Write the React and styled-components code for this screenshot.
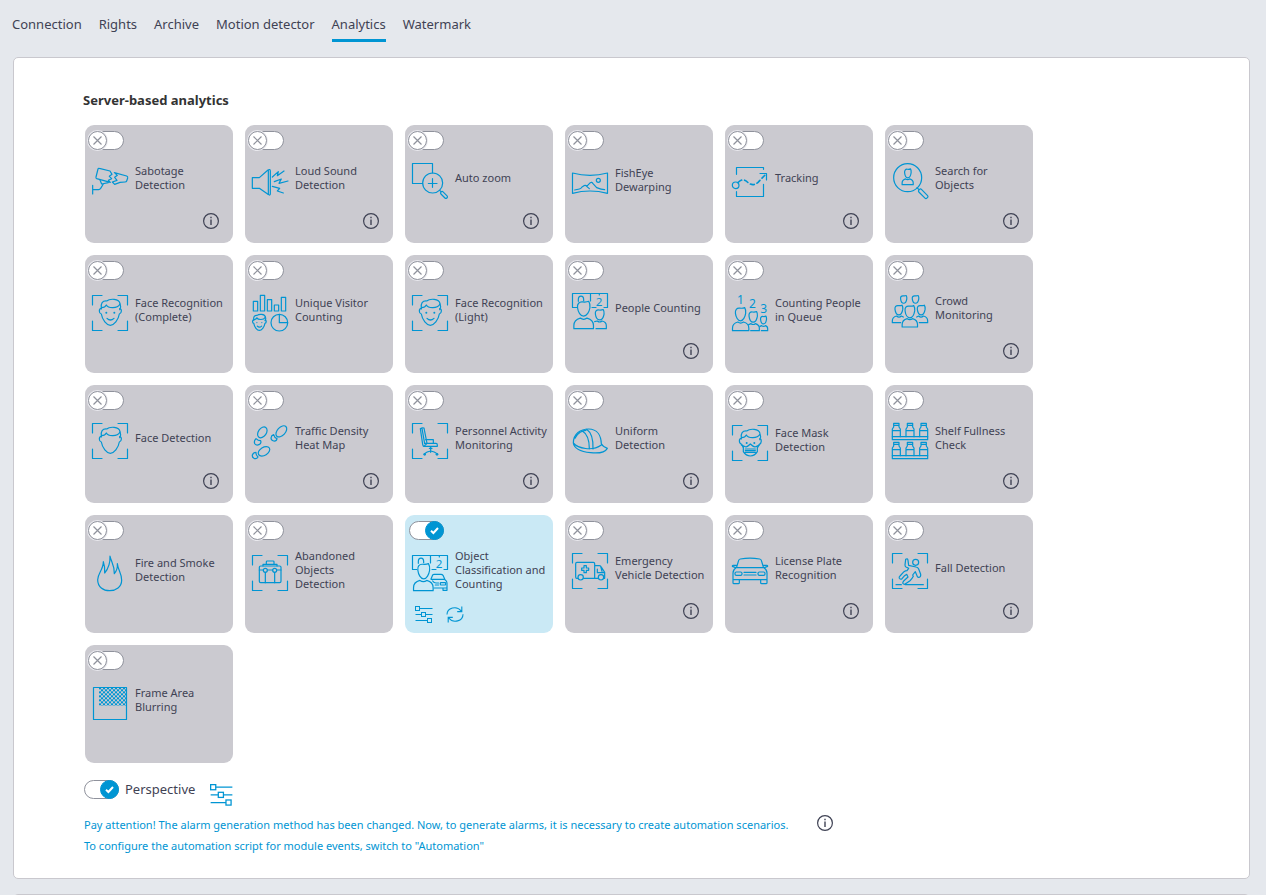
import React, { useState } from 'react';
import styled, { createGlobalStyle, css } from 'styled-components';

const blue = '#0095d3';
const ink = '#3f4254';
const line = '#c9c8ce';

const GlobalStyle = createGlobalStyle`
  *, *::before, *::after { box-sizing: border-box; }
  body {
    margin: 0;
    background: #e5e8ed;
    color: ${ink};
    font-family: "Noto Sans", "Open Sans", sans-serif;
    font-size: 11px;
  }
`;

const Page = styled.div`
  height: 100vh;
  overflow-x: hidden;
  overflow-y: auto;
  scrollbar-width: none;
`;

const Tabs = styled.nav`
  display: flex;
  gap: 17px;
  padding: 14px 12px 0;
  margin-bottom: 15px;
`;

const Tab = styled.a`
  height: 28px;
  font-size: 13px;
  line-height: 20px;
  color: ${ink};
  text-decoration: none;
  white-space: nowrap;
  border-bottom: 3px solid ${(p) => (p.$active ? blue : 'transparent')};
`;

const Panel = styled.section`
  margin: 0 16px 15px 13px;
  padding: 32px 71px 22px;
  background: #fff;
  border: 1px solid ${line};
  border-radius: 5px;
`;

const Heading = styled.h2`
  margin: 0 0 15px -2px;
  font-size: 13px;
  line-height: 20px;
  font-weight: 700;
  color: #333;
`;

const CardGrid = styled.div`
  display: grid;
  grid-template-columns: repeat(auto-fill, 148px);
  gap: 12px;
  max-width: 960px;
`;

const Card = styled.article`
  height: 118px;
  padding-top: 6px;
  border-radius: 9px;
  background: ${(p) => (p.$on ? '#cae9f5' : '#cbcad0')};
`;

const CardBody = styled.div`
  display: flex;
  align-items: center;
  gap: 7px;
  height: ${(p) => (p.$raised ? 56 : 60)}px;
  padding-left: 7px;
`;

const CardTitle = styled.h3`
  margin: 0;
  font-size: 11px;
  line-height: 14px;
  font-weight: 400;
  white-space: pre;
`;

const CardInfo = styled.div`
  display: flex;
  justify-content: flex-end;
  padding: 6px 13px 0 0;
`;

const CardTools = styled.div`
  display: flex;
  gap: 13px;
  padding: 6px 0 0 10px;
`;

const IconButton = styled.button`
  display: block;
  padding: 0;
  border: 0;
  background: none;
  cursor: pointer;
  color: ${(p) => (p.$dark ? ink : blue)};
  svg { display: block; }
`;

const Switch = styled.label`
  position: relative;
  display: block;
  flex: none;
  width: 35px;
  height: 19px;
  margin-left: ${(p) => (p.$inCard ? 4 : 0)}px;
  border: 1px solid #8f929c;
  border-radius: 10px;
  background: #fff;
  cursor: pointer;
`;

const SwitchInput = styled.input`
  position: absolute;
  inset: 0;
  width: 100%;
  height: 100%;
  margin: 0;
  opacity: 0;
  cursor: pointer;
`;

const Knob = styled.span`
  position: absolute;
  top: -1px;
  width: 19px;
  height: 19px;
  border-radius: 50%;
  pointer-events: none;
  ${(p) =>
    p.$on
      ? css`right: -1px; background: ${blue}; border: 1px solid ${blue};`
      : css`left: -2px; background: #fff; border: 1px solid #8f929c; box-shadow: 0 0 0 1px #e9e9ee;`}
  svg { display: block; }
`;

const Drawing = styled.svg`
  flex: none;
  width: 36px;
  height: 36px;
  margin-top: 6px;
  overflow: visible;
  fill: none;
  stroke: ${blue};
  stroke-width: 1.2px;
  stroke-linejoin: round;
  stroke-linecap: round;
  * { vector-effect: non-scaling-stroke; }
  .solid { fill: ${blue}; stroke: none; }
  text { fill: ${blue}; stroke: none; text-anchor: middle; }
`;

const PerspectiveRow = styled.div`
  display: flex;
  align-items: flex-start;
  margin: 17px 0 0 -1px;
`;

const PerspectiveLabel = styled.label`
  margin: 0 15px 0 6px;
  font-size: 13px;
  line-height: 19px;
`;

const PerspectiveTools = styled.div`
  padding-top: 4px;
`;

const Notes = styled.div`
  display: flex;
  align-items: flex-start;
  gap: 28px;
  margin: 7px 0 0 -1px;
`;

const NoteText = styled.div`
  color: ${blue};
  font-size: 11px;
  line-height: 21px;
`;

const Note = styled.p`
  margin: 0;
`;

function Toggle({ id, on, onChange, name, inCard }) {
  return (
    <Switch $inCard={inCard}>
      <SwitchInput id={id} type="checkbox" checked={on} onChange={onChange} aria-label={name} />
      <Knob $on={on}>
        <svg width="17" height="17" viewBox="0 0 17 17" fill="none">
          {on ? (
            <path d="M5 8.8 7.4 11 12 6" stroke="#fff" strokeWidth="2" />
          ) : (
            <path d="M4.5 4.5l8 8M12.5 4.5l-8 8" stroke="#8f929c" strokeWidth="1.2" />
          )}
        </svg>
      </Knob>
    </Switch>
  );
}

function InfoButton({ name }) {
  return (
    <IconButton type="button" $dark aria-label={name}>
      <svg width="18" height="18" viewBox="0 0 18 18" fill="none" stroke="currentColor">
        <circle cx="9" cy="9" r="7.4" strokeWidth="1.2" />
        <path d="M9 7.6V13" strokeWidth="1.4" />
        <path d="M9 4.8v1.5" strokeWidth="1.4" />
      </svg>
    </IconButton>
  );
}

function SlidersIcon({ size }) {
  return (
    <svg width={size} height={size} viewBox="0 0 18 18" fill="none" stroke="currentColor" strokeWidth="1">
      <rect x="0.5" y="0.5" width="4" height="4" />
      <path d="M4.5 2.5h13M0.5 8.5h6M10.5 8.5h7M0.5 14.5h12" />
      <rect x="6.5" y="6.5" width="4" height="4" />
      <rect x="12.5" y="12.5" width="4" height="4" />
    </svg>
  );
}

function RefreshIcon() {
  return (
    <svg width="18" height="18" viewBox="0 0 18 18" fill="none" stroke="currentColor" strokeWidth="1.1">
      <path d="M1 8.6C1 2 10.6-1 15.2 5M15.8 .6v5h-4.6" />
      <path d="M17 8.2C17 15 7.4 18 2.8 12M2.2 16.4v-5h4.6" />
    </svg>
  );
}

const Frame = () => <path d="M1.5 30V1.5H30M78 1.5H106.5V30M106.5 78V106.5H78M30 106.5H1.5V78" />;

const Head = ({ x, y, w, h }) => (
  <path
    transform={`translate(${x} ${y}) scale(${w / 100} ${h / 100})`}
    d="M4 44C0 18 16 4 42 6C62 8 78 6 88 2C96 12 99 28 97 44C92 70 74 99 50 99C26 99 8 72 4 44Z"
  />
);

const Bust = ({ x, y, w, h }) => (
  <path
    transform={`translate(${x} ${y}) scale(${w / 100} ${h / 100})`}
    d="M1 100V72C1 28 16 12 33 4Q50 26 67 4C84 12 99 28 99 72V100Z"
  />
);

const FaceOutline = () => (
  <>
    <path d="M28 40C20 40 20 55 28 57C31 75 44 91 55 91C66 91 79 75 82 57C90 55 90 41 83 41" />
    <path d="M28 42C25 24 32 17 44 18C52 11 82 9 84 26C88 34 85 40 83 44" />
    <path d="M29 38C36 38 41 34 43 30C48 40 76 42 84 27" />
  </>
);

const FaceFeatures = () => (
  <>
    <circle className="solid" cx="43" cy="53" r="3" />
    <circle className="solid" cx="67" cy="53" r="3" />
    <path d="M45 70Q55 80 66 70" />
  </>
);

const Bottle = ({ x, y }) => (
  <path d={`M${x - 8} ${y}h16v6h-16ZM${x - 8} ${y + 6}v5l-4 6v23M${x + 8} ${y + 6}v5l4 6v23M${x - 12} ${y + 22}h24`} />
);

const Counter = () => (
  <>
    <path d="M14 43.5H1.5V1.5H106.5V43.5H96M55.5 1.5V24M60 43.5H72M82 1.5V6" />
    <path d="M19 25V20C19 6 35 6 35 20V23" />
    <text x="81" y="39" fontSize="35">2</text>
  </>
);

const drawings = {
  sabotage: (
    <>
      <path d="M22 16L54 24L60 34L52 40L59 47L49 52L55 58L14 47Q11 46 12 42L18 18Q19 15 22 16Z" />
      <path d="M67 29L104 39Q108 41 107 45L104 54Q103 57 99 57L84 58L68 64L61 57L75 52L68 43L76 37Z" />
      <path d="M24 51L29 63L49 59M2 67V93M2 80H20Q24 80 26 76L34 63" />
    </>
  ),
  sound: (
    <>
      <path d="M1 44H22L48 21Q55 17 55 24V92Q55 99 48 94L22 76H1Z" />
      <path d="M49 22V94M61 42L79 26L76 38L96 24M67 56L88 48L81 61L108 54M61 70L83 76L76 84L94 90" />
    </>
  ),
  zoom: (
    <>
      <path d="M32 61.5H1.5V1.5H61.5V30" />
      <circle cx="62" cy="60" r="30" />
      <path d="M61.5 47V73M49 61.5H75M83 82L87 86" />
      <rect x="84" y="91" width="25" height="9" rx="4" transform="rotate(45 96 95)" />
    </>
  ),
  fisheye: (
    <>
      <path d="M1.5 24Q54 38 106.5 24V85Q54 71 1.5 85Z" />
      <path d="M8 75L22 72Q27 71 30 66L36 62Q42 60 44 64L55 53Q59 50 63 56L74 68Q88 74 98 74M44 64L52 71" />
      <circle cx="79" cy="46" r="6" />
    </>
  ),
  tracking: (
    <>
      <path d="M13.5 34V13.5H94.5V19M94.5 64V100.5H13.5V86M84 31.5H103.5V51" />
      <circle cx="11" cy="67" r="10" />
      <path d="M19 58C28 48 38 49 46 57S66 69 78 58L103 32" strokeDasharray="4 3" strokeWidth="1.6" />
    </>
  ),
  search: (
    <>
      <circle cx="47" cy="44" r="42" />
      <Head x={37} y={17} w={21} h={28} />
      <Bust x={30} y={47} w={34} h={18} />
      <path d="M75 74L81 80" />
      <rect x="77" y="87" width="34" height="11" rx="4" transform="rotate(45 94 92)" />
    </>
  ),
  face: (
    <>
      <Frame />
      <FaceOutline />
      <FaceFeatures />
    </>
  ),
  faceOnly: (
    <>
      <Frame />
      <FaceOutline />
    </>
  ),
  unique: (
    <>
      <path d="M4 19h13v29H4ZM25 1h13v47H25ZM46 14h13v34H46ZM67 30h13v18H67ZM88 7h13v41H88Z" />
      <g transform="translate(-12 50) scale(.62)">
        <FaceOutline />
        <FaceFeatures />
      </g>
      <circle cx="82" cy="83" r="25" />
      <path d="M82 58V83H107" />
    </>
  ),
  people: (
    <>
      <Counter />
      <Head x={15} y={24} w={40} h={46} />
      <Bust x={5} y={74} w={60} h={33} />
      <Head x={69} y={49} w={28} h={32} />
      <path d="M68 86L76 84Q83 90 90 84Q103 87 103 98V107H72" />
    </>
  ),
  queue: (
    <>
      <text x="25" y="26" fontSize="36">1</text>
      <text x="61" y="39" fontSize="36">2</text>
      <text x="95" y="55" fontSize="36">3</text>
      <Head x={9} y={37} w={33} h={41} />
      <Bust x={1} y={80} w={50} h={27} />
      <Head x={50} y={49} w={27} h={33} />
      <path d="M50 89L57 86Q64 91 70 86Q82 90 82 98V107H56" />
      <Head x={85} y={63} w={19} h={24} />
      <path d="M84 94L89 92Q95 96 100 92Q107 94 107 101V107H88" />
    </>
  ),
  crowd: (
    <>
      <Head x={25} y={7} w={20} h={24} />
      <Head x={60} y={7} w={21} h={24} />
      <Head x={8} y={36} w={25} h={30} />
      <Head x={75} y={36} w={25} h={30} />
      <Head x={38} y={37} w={31} h={38} />
      <path d="M26 89H1V84Q1 72 14 69Q21 76 28 69L34 72M82 89H107V84Q107 72 94 69Q87 76 80 69L74 72" />
      <Bust x={30} y={76} w={47} h={26} />
    </>
  ),
  footprints: (
    <>
      <ellipse cx="31" cy="28" rx="12" ry="18" transform="rotate(35 31 28)" />
      <path d="M12 47Q20 54 26 53Q29 62 21 65Q13 68 9 63Q4 55 12 47Z" />
      <ellipse cx="88" cy="25" rx="12" ry="20" transform="rotate(43 88 25)" />
      <path d="M65 35Q67 44 75 47Q74 55 65 54Q57 52 57 45Q58 37 65 35Z" />
      <ellipse cx="36" cy="85" rx="12" ry="19" transform="rotate(58 36 85)" />
      <path d="M12 88Q11 96 18 102Q14 109 6 106Q0 103 1 96Q4 88 12 88Z" />
    </>
  ),
  chair: (
    <>
      <Frame />
      <path d="M25 17Q30 13 36 15L45 61L36 70Q33 70 32 64ZM30 16L38 62" />
      <path d="M41 50H64V59M38 61H72Q76 61 76 66V70H36M56 70V88M38 92Q44 86 56 84Q68 86 75 92M52 76H60" />
      <circle className="solid" cx="38" cy="94" r="4" />
      <circle className="solid" cx="75" cy="94" r="4" />
    </>
  ),
  helmet: (
    <>
      <path d="M4 60C4 32 26 18 50 18C76 18 87 38 88 62Q92 70 106 76C98 90 74 91 56 89C28 86 6 76 4 60C18 76 60 86 88 66" />
      <path d="M30 23C46 32 52 52 52 77M44 19C60 30 64 52 63 78M9 46C16 30 32 22 42 22" />
    </>
  ),
  mask: (
    <>
      <Frame />
      <path d="M28 40C20 40 20 56 29 58L33 66M83 41C90 42 89 56 82 58L78 66M28 42C25 24 32 17 44 18C52 11 82 9 84 26C88 34 85 40 83 44M29 38C36 38 41 34 43 30C48 40 76 42 84 27" />
      <path d="M28 60L42 66Q48 64 55 57Q62 64 69 66L82 60M34 64V80Q42 93 55 93Q68 93 76 80V64M40 72H70M40 77H70M40 82H70" />
      <circle className="solid" cx="44" cy="54" r="3" />
      <circle className="solid" cx="67" cy="54" r="3" />
    </>
  ),
  shelf: (
    <>
      {[1, 58].map((y) => (
        <g key={y}>
          <Bottle x={13} y={y} />
          <Bottle x={54} y={y} />
          <Bottle x={95} y={y} />
          <rect x="1" y={y + 40} width="106" height="9" />
        </g>
      ))}
    </>
  ),
  fire: (
    <path d="M54 3C57 20 68 30 67 56C74 48 77 38 76 26C78 46 89 54 89 76C89 96 72 107 53 107C34 107 17 96 17 74C17 56 34 44 34 20C38 32 39 42 38 54C48 42 55 24 54 3Z" />
  ),
  suitcase: (
    <>
      <Frame />
      <rect x="22" y="33" width="65" height="50" rx="4" />
      <path d="M33 33V28H75V33M43 28V20Q43 18 46 18H63Q66 18 66 20V28M22 45H34M46 45H62M74 45H87M40 52V83M68 52V83" />
      <circle cx="40" cy="46" r="6" />
      <circle cx="68" cy="46" r="6" />
    </>
  ),
  objects: (
    <>
      <Counter />
      <Head x={16} y={25} w={38} h={47} />
      <Bust x={4} y={75} w={60} h={32} />
      <path d="M57 72L62 60Q63 58 67 58H87Q91 58 93 61L99 74Q105 78 105 84V106H93V99M57 73H98M62 78Q66 84 72 84H80M70 90H80M67 99H104" />
      <rect x="85" y="83" width="16" height="7" rx="2" />
    </>
  ),
  ambulance: (
    <>
      <Frame />
      <path d="M18 76H14Q11 76 11 72V32Q11 28 15 28H64Q68 28 68 32V76H35M68 38H82Q86 38 88 42L98 58V76H96M78 76H68M76 48V59H97M86 40L90 55" />
      <path d="M36 38H43V45H50V52H43V59H36V52H29V45H36Z" />
      <circle cx="26" cy="73" r="8" />
      <circle cx="87" cy="73" r="8" />
    </>
  ),
  car: (
    <>
      <path d="M14 42L20 22Q21 19 25 18Q54 13 83 18Q87 19 88 22L94 42M13 37H5Q1 36 1 40L11 44M95 37H103Q107 36 107 40L97 44" />
      <path d="M3 80V60Q3 50 12 44H96Q105 50 105 60V80ZM3 80V89Q3 92 6 92H19Q22 92 22 89V80M86 80V89Q86 92 89 92H102Q105 92 105 89V80M36 58H72M36 66H72" />
      <rect x="9" y="57" width="21" height="10" rx="4" />
      <rect x="78" y="57" width="21" height="10" rx="4" />
    </>
  ),
  fall: (
    <>
      <Frame />
      <circle cx="71" cy="28" r="9" />
      <path d="M41 19Q47 15 48 22L50 37L72 42Q78 43 80 48L86 64Q87 72 81 73Q76 74 75 68L70 56L62 66L64 70Q60 78 54 83L43 91Q37 96 33 92Q31 88 35 84L48 72L44 64Q38 66 30 77Q26 80 22 76Q20 72 24 69L36 56Q40 53 45 53L50 46L42 42Q39 40 39 36Z" />
      <path d="M12 95H28M40 95H94" />
    </>
  ),
  blur: (
    <>
      <defs>
        <pattern id="checker" width="12" height="12" patternUnits="userSpaceOnUse" x="21" y="7">
          <rect className="solid" width="6" height="6" />
          <rect className="solid" x="6" y="6" width="6" height="6" />
        </pattern>
      </defs>
      <rect x="4.5" y="7.5" width="99" height="96" />
      <rect x="21" y="7" width="82" height="55" fill="url(#checker)" stroke="none" />
    </>
  ),
};

const modules = [
  { icon: 'sabotage', title: 'Sabotage\nDetection', info: true },
  { icon: 'sound', title: 'Loud Sound\nDetection', info: true },
  { icon: 'zoom', title: 'Auto zoom', info: true },
  { icon: 'fisheye', title: 'FishEye\nDewarping' },
  { icon: 'tracking', title: 'Tracking', info: true },
  { icon: 'search', title: 'Search for\nObjects', info: true },
  { icon: 'face', title: 'Face Recognition\n(Complete)' },
  { icon: 'unique', title: 'Unique Visitor\nCounting' },
  { icon: 'face', title: 'Face Recognition\n(Light)' },
  { icon: 'people', title: 'People Counting', info: true },
  { icon: 'queue', title: 'Counting People\nin Queue' },
  { icon: 'crowd', title: 'Crowd\nMonitoring', info: true },
  { icon: 'faceOnly', title: 'Face Detection', info: true },
  { icon: 'footprints', title: 'Traffic Density\nHeat Map', info: true },
  { icon: 'chair', title: 'Personnel Activity\nMonitoring', info: true },
  { icon: 'helmet', title: 'Uniform\nDetection', info: true },
  { icon: 'mask', title: 'Face Mask\nDetection' },
  { icon: 'shelf', title: 'Shelf Fullness\nCheck', info: true },
  { icon: 'fire', title: 'Fire and Smoke\nDetection' },
  { icon: 'suitcase', title: 'Abandoned\nObjects\nDetection' },
  { icon: 'objects', title: 'Object\nClassification and\nCounting', on: true },
  { icon: 'ambulance', title: 'Emergency\nVehicle Detection', info: true },
  { icon: 'car', title: 'License Plate\nRecognition', info: true },
  { icon: 'fall', title: 'Fall Detection', info: true },
  { icon: 'blur', title: 'Frame Area\nBlurring' },
];

function ModuleCard({ icon, title, info, on: initial = false }) {
  const [on, setOn] = useState(initial);
  const name = title.replace(/\n/g, ' ');
  return (
    <Card $on={on}>
      <Toggle inCard on={on} onChange={() => setOn(!on)} name={name} />
      <CardBody $raised={info}>
        <Drawing viewBox="0 0 108 108" aria-hidden="true">{drawings[icon]}</Drawing>
        <CardTitle>{title}</CardTitle>
      </CardBody>
      {info && (
        <CardInfo>
          <InfoButton name={`About ${name}`} />
        </CardInfo>
      )}
      {on && !info && (
        <CardTools>
          <IconButton type="button" aria-label="Settings"><SlidersIcon size={18} /></IconButton>
          <IconButton type="button" aria-label="Refresh"><RefreshIcon /></IconButton>
        </CardTools>
      )}
    </Card>
  );
}

const tabs = ['Connection', 'Rights', 'Archive', 'Motion detector', 'Analytics', 'Watermark'];

export default function App() {
  const [perspective, setPerspective] = useState(true);
  return (
    <Page>
      <GlobalStyle />
      <Tabs>
        {tabs.map((t) => (
          <Tab key={t} href="#" $active={t === 'Analytics'}>{t}</Tab>
        ))}
      </Tabs>
      <Panel>
        <Heading>Server-based analytics</Heading>
        <CardGrid>
          {modules.map((m) => (
            <ModuleCard key={m.title} {...m} />
          ))}
        </CardGrid>
        <PerspectiveRow>
          <Toggle id="perspective" on={perspective} onChange={() => setPerspective(!perspective)} />
          <PerspectiveLabel htmlFor="perspective">Perspective</PerspectiveLabel>
          <PerspectiveTools>
            <IconButton type="button" aria-label="Perspective settings"><SlidersIcon size={23} /></IconButton>
          </PerspectiveTools>
        </PerspectiveRow>
        <Notes>
          <NoteText>
            <Note>Pay attention! The alarm generation method has been changed. Now, to generate alarms, it is necessary to create automation scenarios.</Note>
            <Note>To configure the automation script for module events, switch to "Automation"</Note>
          </NoteText>
          <InfoButton name="About alarms" />
        </Notes>
      </Panel>
      <Panel />
    </Page>
  );
}
